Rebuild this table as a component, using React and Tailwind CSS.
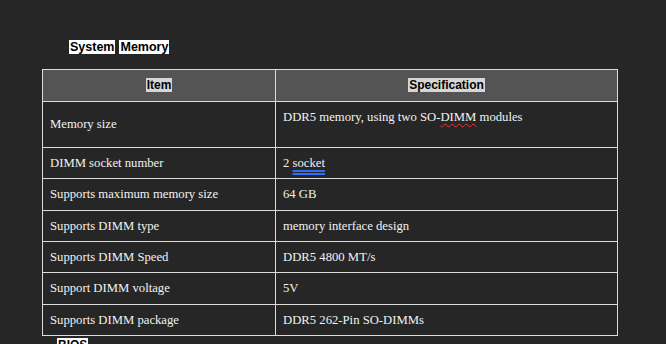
export default function App() {
  const rows = [
    ['DIMM socket number', null],
    ['Supports maximum memory size', '64 GB'],
    ['Supports DIMM type', 'memory interface design'],
    ['Supports DIMM Speed', 'DDR5 4800 MT/s'],
    ['Support DIMM voltage', '5V'],
    ['Supports DIMM package', 'DDR5 262-Pin SO-DIMMs'],
  ];

  const cell = 'border border-[#dcdcdc] px-[7px] py-[8px] align-middle';

  return (
    <div className="min-h-[344px] bg-[#262626] pt-[40px] overflow-hidden">
      {/* section title */}
      <div className="ml-[69px] flex gap-[4px] font-['Liberation_Sans',Arial,sans-serif] text-[12.5px] font-bold leading-[14px] text-black">
        <span className="bg-white px-[1px]">System</span>
        <span className="bg-white px-[1px]">Memory</span>
      </div>

      <table className="ml-[42px] mt-[15px] w-[576px] border-collapse font-['Liberation_Serif','Times_New_Roman',serif] text-[12.7px] leading-[14.4px] text-[#f2f2f2]">
        <thead>
          <tr className="bg-[#545454]">
            <th className="w-[233px] border border-[#dcdcdc] h-[32px] p-0 text-center font-['Liberation_Sans',Arial,sans-serif] text-[12px] font-bold text-black">
              <span className="bg-[#d6d6d6] px-[1px]">Item</span>
            </th>
            <th className="border border-[#dcdcdc] h-[32px] p-0 text-center font-['Liberation_Sans',Arial,sans-serif] text-[12px] font-bold text-black">
              <span className="bg-[#d6d6d6] px-[1px]">Specification</span>
            </th>
          </tr>
        </thead>
        <tbody>
          <tr>
            <td className={cell}>Memory size</td>
            <td className={cell + ' align-top'}>
              DDR5 memory, using two SO-
              <span className="underline decoration-wavy decoration-red-500 decoration-1 underline-offset-2">DIMM</span>
              {' '}modules
              <br />
              &nbsp;
            </td>
          </tr>
          {rows.map(([item, spec]) => (
            <tr key={item}>
              <td className={cell}>{item}</td>
              <td className={cell}>
                {spec ?? (
                  <>
                    2{' '}
                    <span className="underline decoration-double decoration-[#2f6bff] decoration-[1.5px] underline-offset-[3px]">socket</span>
                  </>
                )}
              </td>
            </tr>
          ))}
        </tbody>
      </table>

      <div className="ml-[57px] mt-[2px] font-['Liberation_Sans',Arial,sans-serif] text-[12px] font-bold leading-[14px] text-black">
        <span className="bg-white px-[1px]">BIOS</span>
      </div>
    </div>
  );
}
